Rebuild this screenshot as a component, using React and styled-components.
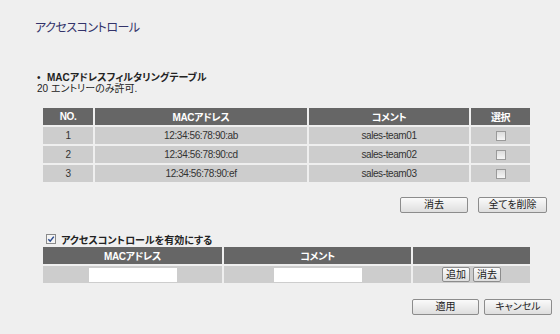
import React from 'react';
import styled, { createGlobalStyle } from 'styled-components';

const GlobalStyle = createGlobalStyle`
  body {
    margin: 0;
    background: #efefef;
    font-family: "Liberation Sans", "Noto Sans CJK JP", sans-serif;
    font-feature-settings: "palt" 1;
    color: #222;
  }
`;

const Page = styled.div`
  width: 560px;
  height: 334px;
  box-sizing: border-box;
  padding: 20px 13px 0 35px;
  overflow: hidden;
`;

const Title = styled.div`
  font-size: 12px;
  line-height: 16px;
  letter-spacing: -0.5px;
  color: #33336a;
`;

const Intro = styled.div`
  margin-top: 36px;
  padding-left: 2px;
  font-size: 10px;
  line-height: 11px;
`;

const Bullet = styled.div`
  font-weight: bold;
  &::before {
    content: '•';
    display: inline-block;
    width: 10px;
    font-weight: normal;
  }
`;

const Table = styled.table`
  border-collapse: separate;
  border-spacing: 2px;
  margin: ${p => p.$top}px 0 0 6px;
  font-size: 10px;
  letter-spacing: -0.4px;
`;

const Th = styled.th`
  background: #666666;
  color: #ffffff;
  font-weight: bold;
  height: 17px;
  padding: 0;
  width: ${p => p.$w}px;
  text-align: center;
  vertical-align: middle;
`;

const Td = styled.td`
  background: #cdcdcd;
  color: #333;
  height: 17px;
  padding: 0;
  text-align: center;
  vertical-align: middle;
`;

const Box = styled.span`
  display: inline-block;
  width: 8px;
  height: 8px;
  border: 1px solid #9a9a9a;
  background: linear-gradient(#dcdcdc, #f6f6f6);
  vertical-align: middle;
`;

const ButtonRow = styled.div`
  display: flex;
  justify-content: flex-end;
  gap: ${p => p.$gap}px;
  margin-top: ${p => p.$top}px;
  margin-right: ${p => p.$right}px;
`;

const Button = styled.button`
  width: ${p => (p.$w ? `${p.$w}px` : 'auto')};
  height: ${p => p.$h || 16}px;
  padding: 0 ${p => (p.$w ? 0 : 3)}px;
  border: 1px solid #8c8c8c;
  border-radius: 2px;
  background: linear-gradient(#fafafa, #dedede);
  font-family: inherit;
  font-feature-settings: "palt" 1;
  font-size: 10px;
  line-height: 1;
  color: #222;
  cursor: pointer;
`;

const EnableRow = styled.label`
  display: flex;
  align-items: center;
  gap: 5px;
  margin-top: 20px;
  padding-left: 11px;
  height: 12px;
  font-size: 10px;
  font-weight: bold;
`;

const TextInput = styled.input`
  width: 88px;
  height: 14px;
  box-sizing: border-box;
  border: none;
  background: #ffffff;
  padding: 0 2px;
  vertical-align: middle;
`;

const Inline = styled.div`
  display: flex;
  justify-content: center;
  gap: 3px;
`;

const CheckIcon = () => (
  <svg width="10" height="10" viewBox="0 0 10 10">
    <rect x="0.5" y="0.5" width="9" height="9" fill="#f4f4f4" stroke="#8a8a8a" />
    <path d="M2.3 5.2 L4.2 7.2 L7.8 2.6" fill="none" stroke="#2b4a8e" strokeWidth="1.5" />
  </svg>
);

const entries = [
  { no: 1, mac: '12:34:56:78:90:ab', comment: 'sales-team01' },
  { no: 2, mac: '12:34:56:78:90:cd', comment: 'sales-team02' },
  { no: 3, mac: '12:34:56:78:90:ef', comment: 'sales-team03' },
];

export default function App() {
  return (
    <Page>
      <GlobalStyle />
      <Title>アクセスコントロール</Title>
      <Intro>
        <Bullet>MACアドレスフィルタリングテーブル</Bullet>
        <div>20 エントリーのみ許可.</div>
      </Intro>
      <Table $top={12}>
        <thead>
          <tr>
            <Th $w={50}>NO.</Th>
            <Th $w={212}>MACアドレス</Th>
            <Th $w={160}>コメント</Th>
            <Th $w={59}>選択</Th>
          </tr>
        </thead>
        <tbody>
          {entries.map(e => (
            <tr key={e.no}>
              <Td>{e.no}</Td>
              <Td>{e.mac}</Td>
              <Td>{e.comment}</Td>
              <Td>
                <Box />
              </Td>
            </tr>
          ))}
        </tbody>
      </Table>
      <ButtonRow $top={13} $gap={10} $right={0}>
        <Button $w={68}>消去</Button>
        <Button $w={69}>全てを削除</Button>
      </ButtonRow>
      <EnableRow>
        <CheckIcon />
        アクセスコントロールを有効にする
      </EnableRow>
      <Table $top={0}>
        <thead>
          <tr>
            <Th $w={179}>MACアドレス</Th>
            <Th $w={187}>コメント</Th>
            <Th $w={117}></Th>
          </tr>
        </thead>
        <tbody>
          <tr>
            <Td>
              <TextInput />
            </Td>
            <Td>
              <TextInput />
            </Td>
            <Td>
              <Inline>
                <Button $h={15}>追加</Button>
                <Button $h={15}>消去</Button>
              </Inline>
            </Td>
          </tr>
        </tbody>
      </Table>
      <ButtonRow $top={14} $gap={5} $right={-5}>
        <Button $w={67}>適用</Button>
        <Button $w={68}>キャンセル</Button>
      </ButtonRow>
    </Page>
  );
}
